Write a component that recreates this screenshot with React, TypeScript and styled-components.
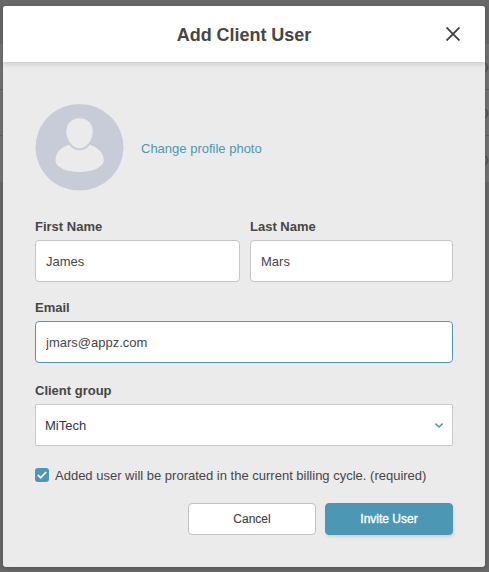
import React, { useState } from 'react';
import styled, { createGlobalStyle } from 'styled-components';

const GlobalStyle = createGlobalStyle`
  * { box-sizing: border-box; }
  body {
    margin: 0;
    overflow: hidden;
    font-family: "Liberation Sans", Arial, sans-serif;
    color: #464646;
  }
  input, button { font-family: inherit; }
`;

const Page = styled.div`
  position: relative;
  width: 489px;
  height: 572px;
  overflow: hidden;
  background: #676767;
`;

const TableBackdrop = styled.div`
  padding-top: 44px;
`;

const TableRow = styled.div`
  display: flex;
  align-items: center;
  justify-content: flex-end;
  height: 46px;
  background: #717171;
  border-bottom: 1px solid #606060;
  color: #424c5c;
  font-size: 13px;
  &:last-child { border-bottom: 0; }
`;

const RowValue = styled.span`
  flex: none;
  width: 15px;
  margin: 2px -7px 0 0;
  white-space: nowrap;
`;

const Dialog = styled.section`
  position: absolute;
  top: 6px;
  left: 3px;
  display: flex;
  flex-direction: column;
  width: 482px;
  height: 561px;
  border-radius: 3px;
  background: #ebebeb;
  box-shadow: 0 1px 4px rgba(0, 0, 0, 0.2);
  overflow: hidden;
`;

const Header = styled.header`
  display: grid;
  grid-template-columns: 60px 1fr 60px;
  align-items: center;
  justify-items: center;
  height: 56px;
  flex: none;
  background: #fff;
  box-shadow: 0 1px 7px rgba(0, 0, 0, 0.18);
`;

const Title = styled.h1`
  grid-column: 2;
  margin: 1px 0 0;
  font-size: 18px;
  line-height: 22px;
  letter-spacing: -0.03px;
  white-space: nowrap;
`;

const CloseButton = styled.button`
  display: flex;
  margin-right: 5px;
  padding: 0;
  border: 0;
  background: none;
`;

const Form = styled.form`
  display: flex;
  flex-direction: column;
  padding: 42px 32px 0;
`;

const Profile = styled.div`
  display: flex;
  align-items: center;
  gap: 17px;
  height: 87px;
  margin-bottom: 29px;
`;

const PhotoLink = styled.a`
  margin-top: 2px;
  color: #4c97b3;
  font-size: 13px;
`;

const FieldRow = styled.div`
  display: grid;
  grid-template-columns: 205px 203px;
  gap: 10px;
`;

const Field = styled.div<{ $after: number }>`
  display: flex;
  flex-direction: column;
  margin-bottom: ${p => p.$after}px;
`;

const Label = styled.label`
  height: 20px;
  font-size: 13px;
  font-weight: 700;
  line-height: 14px;
`;

const Input = styled.input<{ $active?: boolean }>`
  width: 100%;
  height: 42px;
  padding: 1px 10px 0;
  border: 1px solid ${p => (p.$active ? '#4c97b3' : '#c5c5c5')};
  border-radius: 4px;
  outline: none;
  background: #fff;
  color: #464646;
  font-size: 13px;
`;

const Select = styled.div`
  display: flex;
  align-items: center;
  justify-content: space-between;
  height: 42px;
  padding: 0 9px;
  border: 1px solid #c9c9c9;
  border-radius: 2px;
  background: #fff;
  color: #30364a;
  font-size: 13px;
`;

const Consent = styled.div`
  display: flex;
  align-items: center;
  gap: 6px;
  height: 14px;
  margin-bottom: 21px;
`;

const Checkbox = styled.span`
  display: flex;
  align-items: center;
  justify-content: center;
  width: 14px;
  height: 14px;
  border-radius: 3px;
  background: #4c97b3;
`;

const ConsentText = styled.span`
  margin-top: 1px;
  font-size: 13px;
  white-space: nowrap;
`;

const Actions = styled.div`
  display: flex;
  justify-content: flex-end;
  gap: 9px;
`;

const Button = styled.button<{ $primary?: boolean }>`
  width: 128px;
  height: 32px;
  padding: 0;
  border: 1px solid ${p => (p.$primary ? '#4c97b3' : '#c1c1c1')};
  border-radius: 4px;
  background: ${p => (p.$primary ? '#4c97b3' : '#fff')};
  color: ${p => (p.$primary ? '#fff' : '#404040')};
  font-size: 12px;
  -webkit-text-stroke: ${p => (p.$primary ? '0.35px #fff' : '0.1px #404040')};
  box-shadow: ${p => (p.$primary ? '1px 2px 3px rgba(0, 0, 0, 0.1)' : 'none')};
`;

const Avatar = () => (
  <svg width="89" height="87" viewBox="0 0 89 87">
    <ellipse cx="44.5" cy="43.3" rx="44" ry="43.3" fill="#c8ccd8" />
    <path
      d="M34 40.8C25 43.5 20.5 49.5 20.5 56C20.5 63 31 68 44.5 68C58 68 68.8 63 68.8 56C68.8 49.5 63.5 43.5 54.8 40.8C52 44.6 48.5 46.3 44.5 46.3C40.5 46.3 37 44.6 34 40.8Z"
      fill="#ebebeb"
    />
    <path
      d="M44.5 14.3C52.5 14.3 57.7 19.8 57.7 27.2C57.7 36 51.7 44.3 44.5 44.3C37.3 44.3 31.3 36 31.3 27.2C31.3 19.8 36.5 14.3 44.5 14.3Z"
      fill="#ebebeb"
    />
  </svg>
);

export default function App() {
  const [user, setUser] = useState({ first: 'James', last: 'Mars', email: 'jmars@appz.com' });
  const update = (key: keyof typeof user) => (e: React.ChangeEvent<HTMLInputElement>) =>
    setUser({ ...user, [key]: e.target.value });

  return (
    <Page>
      <GlobalStyle />
      <TableBackdrop>
        {[0, 1, 2].map(row => (
          <TableRow key={row}><RowValue>00</RowValue></TableRow>
        ))}
      </TableBackdrop>
      <Dialog role="dialog" aria-labelledby="title">
        <Header>
          <Title id="title">Add Client User</Title>
          <CloseButton aria-label="Close">
            <svg width="14" height="14" viewBox="0 0 14 14" fill="none" stroke="#424246" strokeWidth="1.9">
              <path d="M.5.5l13 13M13.5.5l-13 13" />
            </svg>
          </CloseButton>
        </Header>
        <Form>
          <Profile>
            <Avatar />
            <PhotoLink>Change profile photo</PhotoLink>
          </Profile>
          <FieldRow>
            <Field $after={19}>
              <Label htmlFor="first">First Name</Label>
              <Input id="first" value={user.first} onChange={update('first')} />
            </Field>
            <Field $after={19}>
              <Label htmlFor="last">Last Name</Label>
              <Input id="last" value={user.last} onChange={update('last')} />
            </Field>
          </FieldRow>
          <Field $after={21}>
            <Label htmlFor="email">Email</Label>
            <Input id="email" $active value={user.email} onChange={update('email')} />
          </Field>
          <Field $after={22}>
            <Label>Client group</Label>
            <Select>
              MiTech
              <svg width="8" height="5" viewBox="0 0 8 5" fill="none" stroke="#4c97b3" strokeWidth="1.4">
                <path d="M.4.6L4 4L7.6.6" />
              </svg>
            </Select>
          </Field>
          <Consent>
            <Checkbox role="checkbox" aria-checked="true">
              <svg width="10" height="8" viewBox="0 0 10 8" fill="none" stroke="#fff" strokeWidth="1.8">
                <path d="M.8 4L3.7 6.7L9.2 1" />
              </svg>
            </Checkbox>
            <ConsentText>Added user will be prorated in the current billing cycle. (required)</ConsentText>
          </Consent>
          <Actions>
            <Button type="button">Cancel</Button>
            <Button type="button" $primary>Invite User</Button>
          </Actions>
        </Form>
      </Dialog>
    </Page>
  );
}
